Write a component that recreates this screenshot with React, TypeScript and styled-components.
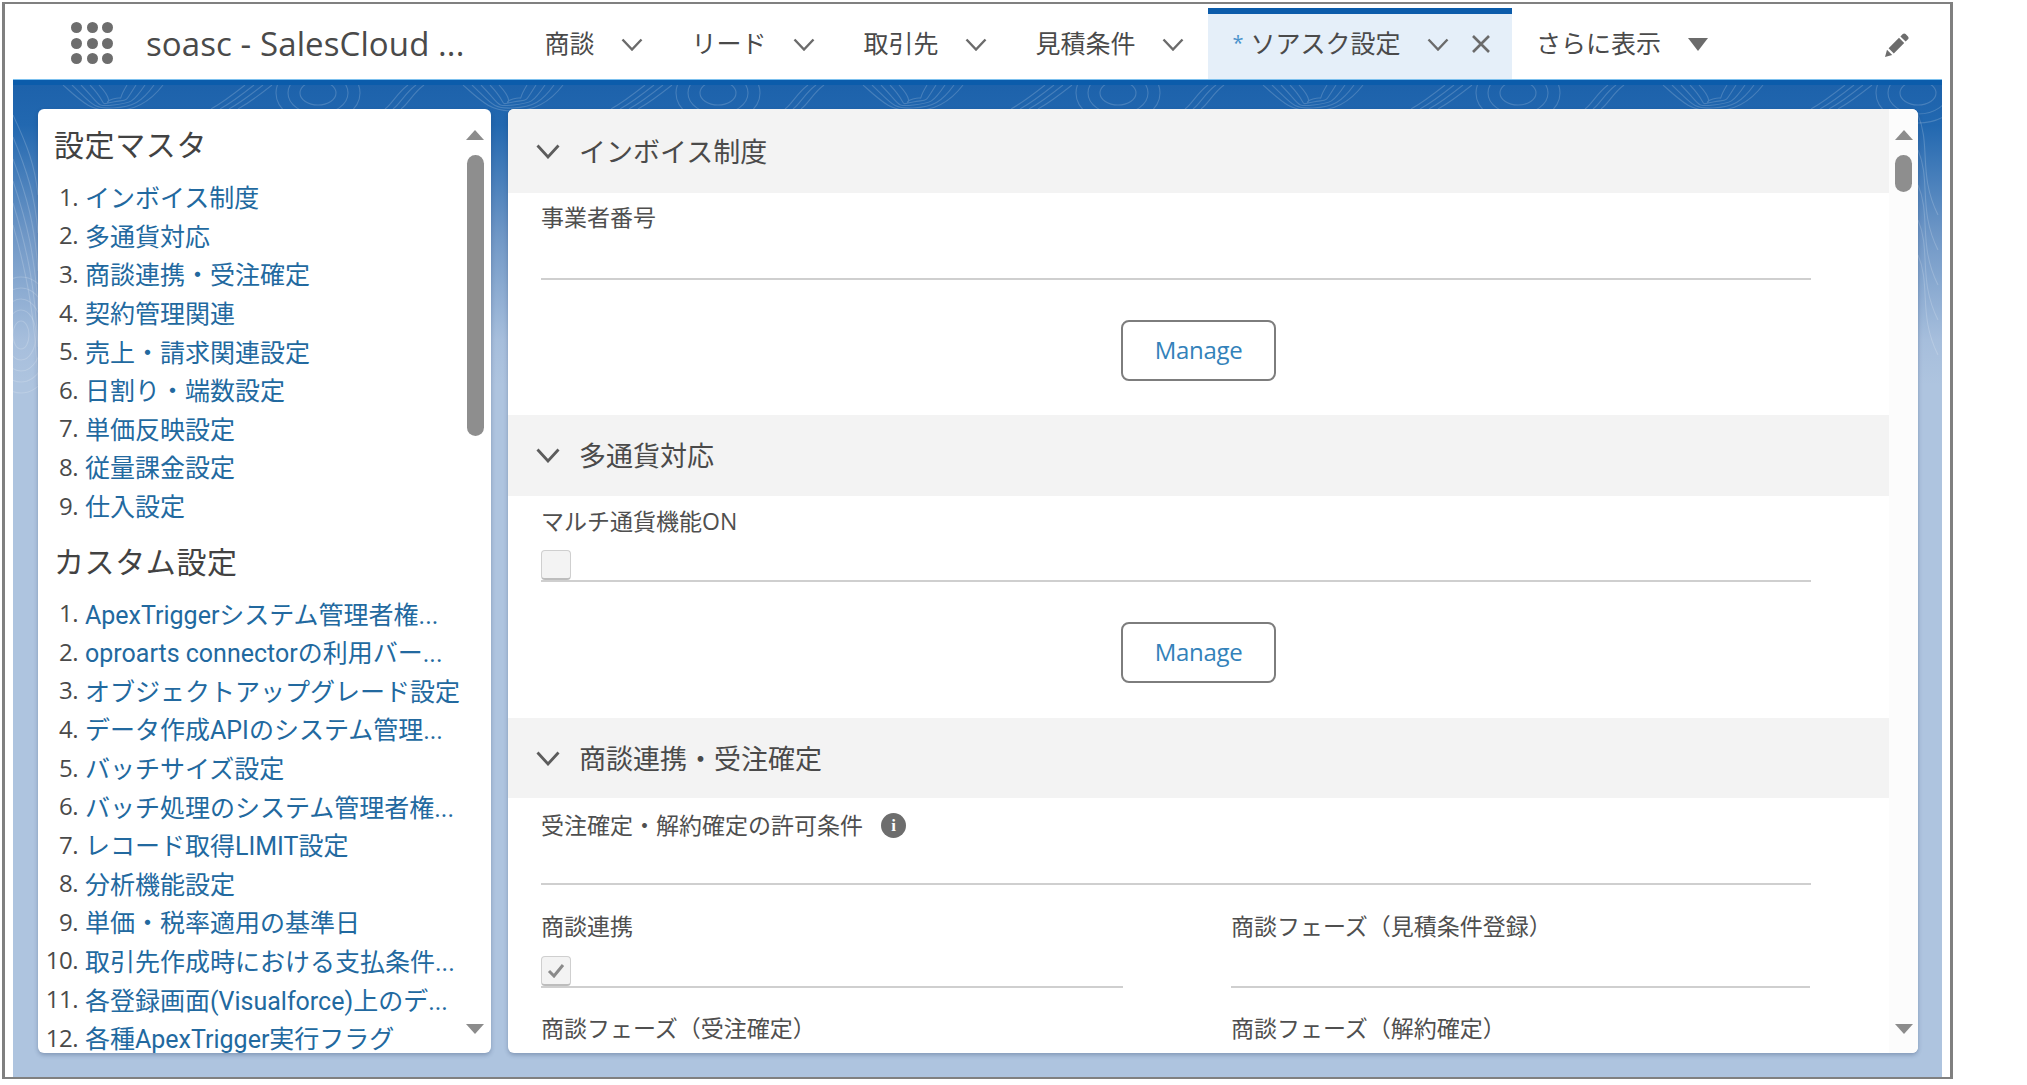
import React from "react";
import styled, { createGlobalStyle } from "styled-components";

const Global = createGlobalStyle`
  html, body { margin: 0; padding: 0; background: #fff; }
  body { font-family: "Open Sans", "Noto Sans CJK JP", sans-serif; color: #444; }
  * { box-sizing: border-box; }
`;

const Frame = styled.div`
  margin: 2px 0 0 2px;
  width: 1951px;
  height: 1077px;
  border: solid #808080;
  border-width: 2px 3px;
  padding: 0 8px;
  background: #fff;
  display: flex;
  flex-direction: column;
`;

const Header = styled.header`
  height: 76px;
  flex: none;
  display: flex;
  align-items: stretch;
  padding-left: 58px;
  background: #fff;
`;

const Launcher = styled.div`
  display: grid;
  grid-template-columns: repeat(3, 11px);
  grid-auto-rows: 11px;
  gap: 4.5px;
  align-self: center;
  margin-top: 2px;
`;

const Dot = styled.span`
  border-radius: 50%;
  background: #6d6d6d;
`;

const AppTitle = styled.div`
  width: 374px;
  margin-left: 33px;
  align-self: center;
  font-size: 33px;
  letter-spacing: 0.1px;
  color: #4a4a4a;
  padding-top: 3px;
`;

const Tabs = styled.nav`
  display: flex;
  align-items: stretch;
`;

const Tab = styled.div<{ $active?: boolean }>`
  display: flex;
  align-items: center;
  padding: 0 ${(p) => (p.$active ? "21px" : "24.5px")} 9px 24.5px;
  font-size: 25px;
  color: #4a4a4a;
  white-space: nowrap;
  margin-top: 4px;
  margin-bottom: 1px;
  border-top: 6px solid ${(p) => (p.$active ? "#0b5cab" : "transparent")};
  background: ${(p) => (p.$active ? "#e5eff9" : "transparent")};
`;

const Star = styled.span`
  color: #4a93cc;
  font-size: 20px;
  width: 18px;
`;

const TabIcon = styled.svg<{ $gap: number }>`
  flex: none;
  margin-left: ${(p) => p.$gap}px;
  margin-top: 4px;
`;

const Pencil = styled.svg`
  margin-left: auto;
  margin-right: 32px;
  align-self: center;
  margin-top: 5px;
`;

const Main = styled.main`
  flex: 1;
  min-height: 0;
  position: relative;
  display: flex;
  gap: 17px;
  padding: 24px 24px 24px 25px;
  border-top: 5px solid #0b5cab;
  box-shadow: 0 -1px 0 #7cc0ee;
  background: linear-gradient(180deg, #1d62ab 0, #2268b0 40px, #6f97c6 150px, #a6bedc 255px, #aec4df 300px);
`;

const Topo = styled.svg`
  position: absolute;
  left: 0;
  top: 0;
  pointer-events: none;
`;

const Panel = styled.section<{ $width: number }>`
  position: relative;
  width: ${(p) => p.$width}px;
  flex: none;
  display: flex;
  background: #fff;
  border-radius: 6px;
  overflow: hidden;
  box-shadow: 0 2px 4px rgba(30, 50, 90, 0.3);
`;

const NavColumn = styled.div`
  flex: 1;
  min-width: 0;
  padding: 16px 0 0 16px;
`;

const NavHeading = styled.h2<{ $top?: number }>`
  margin: ${(p) => p.$top ?? 0}px 0 0 0;
  height: 40px;
  line-height: 40px;
  font-size: 30px;
  font-weight: 400;
  color: #424242;
  letter-spacing: 0.6px;
`;

const NavList = styled.ol<{ $top: number }>`
  list-style: none;
  margin: ${(p) => p.$top}px 0 0 -16px;
  padding: 0;
`;

const NavItem = styled.li`
  display: flex;
  height: 38.6px;
  align-items: center;
  white-space: nowrap;
  font-size: 25px;
  padding-bottom: 1px;
`;

const NavNumber = styled.span`
  flex: none;
  width: 40px;
  text-align: right;
  color: #4a4a4a;
  font-size: 24px;
  letter-spacing: -0.5px;
  margin-right: 7px;
`;

const NavLink = styled.a`
  color: #22699f;
  font-family: "Roboto", "Noto Sans CJK JP", sans-serif;
`;

const ScrollColumn = styled.div<{ $width: number; $bg?: string }>`
  flex: none;
  width: ${(p) => p.$width}px;
  background: ${(p) => p.$bg ?? "transparent"};
  display: flex;
  flex-direction: column;
  align-items: center;
  padding: 21px 0 19px;
`;

const ArrowUp = styled.span`
  width: 0;
  height: 0;
  border-left: 9px solid transparent;
  border-right: 9px solid transparent;
  border-bottom: 10px solid #8c8c8c;
`;

const ArrowDown = styled.span`
  margin-top: auto;
  width: 0;
  height: 0;
  border-left: 9px solid transparent;
  border-right: 9px solid transparent;
  border-top: 10px solid #8c8c8c;
`;

const Thumb = styled.div<{ $height: number }>`
  margin-top: 15px;
  width: 17px;
  height: ${(p) => p.$height}px;
  border-radius: 9px;
  background: #8e8e8e;
`;

const Content = styled.div`
  flex: 1;
  min-width: 0;
`;

const SectionHeader = styled.div<{ $height: number }>`
  height: ${(p) => p.$height}px;
  background: #f3f3f3;
  display: flex;
  align-items: center;
  gap: 19px;
  padding-left: 28px;
  font-size: 27px;
  color: #4a4a4a;
`;

const SectionName = styled.span`
  margin-top: -2px;
`;

const Field = styled.div<{ $top: number; $inset?: boolean }>`
  margin: ${(p) => p.$top}px ${(p) => (p.$inset ? "78px" : "0")} 0 ${(p) => (p.$inset ? "33px" : "0")};
`;

const FieldLabel = styled.div`
  height: 32px;
  display: flex;
  align-items: center;
  gap: 18px;
  padding-bottom: 2px;
  font-size: 23px;
  color: #4f4f4f;
  white-space: nowrap;
`;

const FieldValue = styled.div<{ $height: number }>`
  height: ${(p) => p.$height + 2}px;
  display: flex;
  align-items: flex-end;
  border-bottom: 2px solid #cfcfcf;
`;

const Check = styled.div`
  width: 30px;
  height: 30px;
  display: flex;
  align-items: center;
  justify-content: center;
  background: #f3f3f3;
  border: 1px solid #cfcfcf;
  border-bottom: 2px solid #bdbdbd;
  border-radius: 4px;
`;

const InfoIcon = styled.span`
  width: 25px;
  height: 25px;
  margin-top: 2px;
  border-radius: 50%;
  background: #6d6d6d;
  color: #fff;
  font-size: 17px;
  font-weight: 700;
  line-height: 25px;
  text-align: center;
  font-family: "Liberation Serif", serif;
`;

const ButtonRow = styled.div<{ $bottom: number }>`
  display: flex;
  justify-content: center;
  padding: 40px 0 ${(p) => p.$bottom}px;
`;

const ManageButton = styled.button`
  width: 155px;
  height: 61px;
  border: 2px solid #7d7d7d;
  border-radius: 8px;
  background: #fff;
  color: #3382ba;
  font-family: inherit;
  font-size: 24px;
  letter-spacing: -0.3px;
  padding: 0 0 2px;
`;

const FieldGrid = styled.div`
  display: grid;
  grid-template-columns: 582px 579px;
  column-gap: 108px;
  row-gap: 24px;
  margin: 25px 0 0 33px;
`;

const Chevron = ({ w, h, gap, sw = 2.4, color = "#6b6b6b" }: { w: number; h: number; gap: number; sw?: number; color?: string }) => (
  <TabIcon $gap={gap} width={w} height={h} viewBox={`0 0 ${w} ${h}`} fill="none">
    <polyline points={`1.5,1.5 ${w / 2},${h - 1.5} ${w - 1.5},1.5`} stroke={color} strokeWidth={sw} />
  </TabIcon>
);

const CloseIcon = () => (
  <TabIcon $gap={22} width="20" height="20" viewBox="0 0 20 20" fill="none">
    <path d="M2 2l16 16M18 2L2 18" stroke="#6b6b6b" strokeWidth="2.6" />
  </TabIcon>
);

const CaretIcon = () => (
  <TabIcon $gap={27} width="20" height="13" viewBox="0 0 20 13">
    <path d="M0 0h20L10 13z" fill="#6b6b6b" />
  </TabIcon>
);

const TopoPattern = () => {
  const tiles = Array.from({ length: 6 }, (_, i) => i * 400);
  return (
    <Topo width="1929" height="420" viewBox="0 0 1929 420" fill="none" stroke="#fff" strokeOpacity="0.18" strokeWidth="1.1">
      {tiles.map((x) => (
        <g key={x} transform={`translate(${x} 0)`}>
          {[0, 1, 2, 3, 4].map((n) => (
            <path key={`v${n}`} d={`M${50 + n * 9} 0C${70 + n * 9} ${18 + n} ${78 + n * 2} ${26 - n * 2} ${100} ${26 - n * 3}S${138 - n * 9} ${16 + n} ${150 - n * 9} 0`} />
          ))}
          {[0, 1, 2].map((n) => (
            <ellipse key={`e${n}`} cx="305" cy="8" rx={18 + n * 12} ry={12 + n * 9} />
          ))}
          {[0, 1, 2, 3].map((n) => (
            <path key={`d${n}`} d={`M${198 + n * 9} 24C${212 + n * 9} 16 ${222 + n * 9} 8 ${232 + n * 9} 0`} />
          ))}
          {[0, 1, 2].map((n) => (
            <path key={`s${n}`} d={`M${372 + n * 8} 24C${380 + n * 8} 18 ${384 + n * 8} 8 ${395 + n * 8} 0`} />
          ))}
        </g>
      ))}
      {[0, 1, 2, 3, 4, 5].map((n) => (
        <path key={`l${n}`} d={`M0 ${30 + n * 22}C14 ${60 + n * 26} 22 ${80 + n * 30} 25 ${110 + n * 38}`} />
      ))}
      {[0, 1, 2, 3, 4].map((n) => (
        <ellipse key={`o${n}`} cx="8" cy="250" rx={8 + n * 7} ry={14 + n * 11} />
      ))}
      {[0, 1, 2, 3, 4].map((n) => (
        <path key={`r${n}`} d={`M1905 ${30 + n * 35}C1918 ${60 + n * 35} 1905 ${90 + n * 35} 1925 ${130 + n * 35}`} />
      ))}
    </Topo>
  );
};

const masters = ["インボイス制度", "多通貨対応", "商談連携・受注確定", "契約管理関連", "売上・請求関連設定", "日割り・端数設定", "単価反映設定", "従量課金設定", "仕入設定"];
const customs = ["ApexTriggerシステム管理者権...", "oproarts connectorの利用バー...", "オブジェクトアップグレード設定", "データ作成APIのシステム管理...", "バッチサイズ設定", "バッチ処理のシステム管理者権...", "レコード取得LIMIT設定", "分析機能設定", "単価・税率適用の基準日", "取引先作成時における支払条件...", "各登録画面(Visualforce)上のデ...", "各種ApexTrigger実行フラグ"];
const tabs = [
  { label: "商談" },
  { label: "リード" },
  { label: "取引先" },
  { label: "見積条件" },
];

const NavEntries = ({ items, top }: { items: string[]; top: number }) => (
  <NavList $top={top}>
    {items.map((t, i) => (
      <NavItem key={t}>
        <NavNumber>{i + 1}.</NavNumber>
        <NavLink>{t}</NavLink>
      </NavItem>
    ))}
  </NavList>
);

const SectionTitle = ({ title, height }: { title: string; height: number }) => (
  <SectionHeader $height={height}>
    <svg width="24" height="15" viewBox="0 0 24 15" fill="none">
      <polyline points="1.5,1.5 12,13 22.5,1.5" stroke="#5c5c5c" strokeWidth="2.8" />
    </svg>
    <SectionName>{title}</SectionName>
  </SectionHeader>
);

export default function App() {
  return (
    <>
      <Global />
      <Frame>
        <Header>
          <Launcher>
            {Array.from({ length: 9 }, (_, i) => (
              <Dot key={i} />
            ))}
          </Launcher>
          <AppTitle>soasc - SalesCloud ...</AppTitle>
          <Tabs>
            {tabs.map((t) => (
              <Tab key={t.label}>
                {t.label}
                <Chevron w={22} h={13} gap={26} />
              </Tab>
            ))}
            <Tab $active>
              <Star>*</Star>
              ソアスク設定
              <Chevron w={22} h={13} gap={26} />
              <CloseIcon />
            </Tab>
            <Tab>
              さらに表示
              <CaretIcon />
            </Tab>
          </Tabs>
          <Pencil width="26" height="26" viewBox="0 0 26 26">
            <path d="M1 25l2-7.2L8.2 23zM4.6 16.2L15 5.8l5.2 5.2L9.8 21.4zM16.4 4.4L18.8 2c.8-.8 2-.8 2.8 0l2.4 2.4c.8.8.8 2 0 2.8l-2.4 2.4z" fill="#6d6d6d" />
          </Pencil>
        </Header>
        <Main>
          <TopoPattern />
          <Panel $width={453}>
            <NavColumn>
              <NavHeading>設定マスタ</NavHeading>
              <NavEntries items={masters} top={12.5} />
              <NavHeading $top={17.5}>カスタム設定</NavHeading>
              <NavEntries items={customs} top={11.5} />
            </NavColumn>
            <ScrollColumn $width={32}>
              <ArrowUp />
              <Thumb $height={281} />
              <ArrowDown />
            </ScrollColumn>
          </Panel>
          <Panel $width={1410}>
            <Content>
              <SectionTitle title="インボイス制度" height={84} />
              <Field $top={8} $inset>
                <FieldLabel>事業者番号</FieldLabel>
                <FieldValue $height={45} />
              </Field>
              <ButtonRow $bottom={34}>
                <ManageButton>Manage</ManageButton>
              </ButtonRow>
              <SectionTitle title="多通貨対応" height={81} />
              <Field $top={9} $inset>
                <FieldLabel>マルチ通貨機能ON</FieldLabel>
                <FieldValue $height={43}>
                  <Check />
                </FieldValue>
              </Field>
              <ButtonRow $bottom={35}>
                <ManageButton>Manage</ManageButton>
              </ButtonRow>
              <SectionTitle title="商談連携・受注確定" height={80} />
              <Field $top={11} $inset>
                <FieldLabel>
                  受注確定・解約確定の許可条件
                  <InfoIcon>i</InfoIcon>
                </FieldLabel>
                <FieldValue $height={42} />
              </Field>
              <FieldGrid>
                <Field $top={0}>
                  <FieldLabel>商談連携</FieldLabel>
                  <FieldValue $height={44}>
                    <Check>
                      <svg width="18" height="15" viewBox="0 0 18 15" fill="none">
                        <path d="M2 8l5 5L16 2" stroke="#8a8a8a" strokeWidth="3" />
                      </svg>
                    </Check>
                  </FieldValue>
                </Field>
                <Field $top={0}>
                  <FieldLabel>商談フェーズ（見積条件登録）</FieldLabel>
                  <FieldValue $height={44} />
                </Field>
                <Field $top={0}>
                  <FieldLabel>商談フェーズ（受注確定）</FieldLabel>
                </Field>
                <Field $top={0}>
                  <FieldLabel>商談フェーズ（解約確定）</FieldLabel>
                </Field>
              </FieldGrid>
            </Content>
            <ScrollColumn $width={29} $bg="#fcfcfc">
              <ArrowUp />
              <Thumb $height={37} />
              <ArrowDown />
            </ScrollColumn>
          </Panel>
        </Main>
      </Frame>
    </>
  );
}
